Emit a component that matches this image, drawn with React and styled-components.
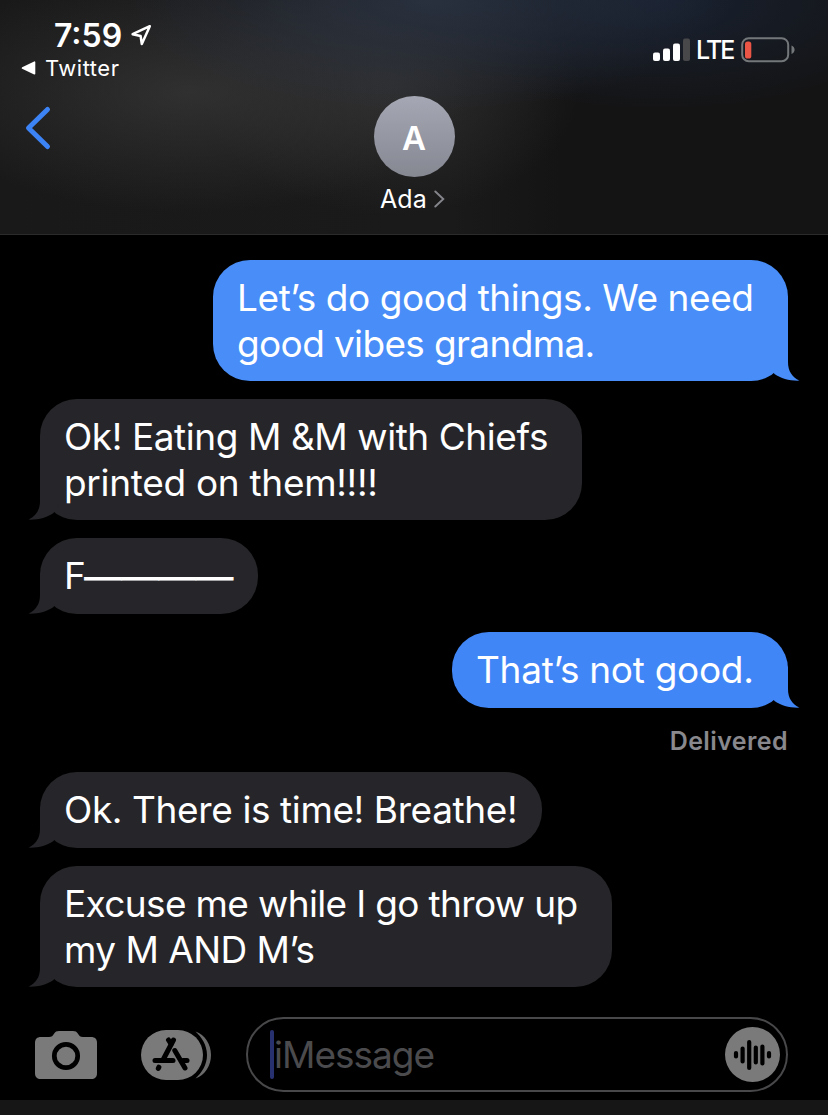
import React from "react";
import styled, { createGlobalStyle } from "styled-components";

const GlobalStyle = createGlobalStyle`
  * { box-sizing: border-box; }
  body { margin: 0; background: #000; font-family: Inter, "Liberation Sans", sans-serif; color: #fff; }
`;

const Screen = styled.div`
  width: 828px;
  height: 1115px;
  display: flex;
  flex-direction: column;
  background: #000;
  overflow: hidden;
`;

const Header = styled.header`
  flex: none;
  height: 235px;
  border-bottom: 1px solid #2b2b2c;
  background:
    radial-gradient(ellipse 300px 110px at 430px 0, rgba(42, 51, 67, 0.85), rgba(42, 51, 67, 0) 100%),
    radial-gradient(ellipse 260px 110px at 660px 0, rgba(25, 35, 53, 0.85), rgba(25, 35, 53, 0) 100%),
    radial-gradient(ellipse 280px 120px at 190px 92px, rgba(54, 54, 55, 0.8), rgba(54, 54, 55, 0) 100%),
    radial-gradient(ellipse 190px 130px at 390px 85px, rgba(50, 50, 51, 0.8), rgba(50, 50, 51, 0) 100%),
    linear-gradient(90deg, #19191a 0, #1a1a1b 450px, #141415 560px, #141415 100%);
`;

const StatusBar = styled.div`
  height: 84px;
  display: flex;
  justify-content: space-between;
  padding: 15px 33px 0 21px;
`;

const ClockRow = styled.div`
  display: flex;
  align-items: center;
  gap: 7px;
  height: 40px;
  padding-left: 33px;
`;

const Clock = styled.span`
  width: 69px;
  font-size: 32px;
  font-weight: 600;
  letter-spacing: 0;
  white-space: nowrap;
`;

const ReturnLink = styled.div`
  display: flex;
  align-items: center;
  gap: 9px;
  height: 26px;
  font-size: 22px;
  letter-spacing: 0.5px;
`;

const Signals = styled.div`
  display: flex;
  align-items: center;
  height: 30px;
  margin-top: 20px;
`;

const Carrier = styled.span`
  width: 41px;
  margin: 0 4px 0 5px;
  font-size: 25px;
  font-weight: 450;
  letter-spacing: -1.9px;
`;

const Nav = styled.div`
  display: grid;
  grid-template-columns: 1fr 120px 1fr;
  padding-top: 12px;
`;

const Back = styled.div`
  padding: 9px 0 0 24px;
`;

const Contact = styled.div`
  display: flex;
  flex-direction: column;
  align-items: center;
`;

const Avatar = styled.div`
  width: 81px;
  height: 81px;
  border-radius: 50%;
  display: flex;
  align-items: center;
  justify-content: center;
  padding-top: 2px;
  background: linear-gradient(#a5a8b4, #858791);
  font-size: 33px;
  font-weight: 600;
`;

const ContactName = styled.div`
  display: flex;
  align-items: center;
  gap: 7px;
  height: 32px;
  margin: 6px 3px 0 0;
  font-size: 25px;
  letter-spacing: 0.2px;
`;

const Thread = styled.main`
  flex: none;
  height: 752px;
  display: flex;
  flex-direction: column;
  gap: 18px;
  padding: 25px 40px 0;
`;

const Bubble = styled.div`
  position: relative;
  align-self: ${(p) => (p.$sent ? "flex-end" : "flex-start")};
  width: ${(p) => p.$width}px;
  min-height: 76px;
  padding: 15px 0 14px 24px;
  border-radius: 37px;
  background: ${(p) => p.$fill};
  font-size: 37px;
  line-height: 46px;
  white-space: nowrap;
`;

const Line = styled.div`
  letter-spacing: ${(p) => p.$track || 0}px;
`;

const Dashes = styled.span`
  font-family: "Liberation Sans", sans-serif;
  line-height: 1;
  letter-spacing: 0.2px;
  margin-left: -1px;
  vertical-align: 1px;
  -webkit-text-stroke: 0.9px #fff;
`;

const Tail = styled.svg`
  position: absolute;
  bottom: 0;
  ${(p) => (p.$sent ? "right: -12px;" : "left: -12px; transform: scaleX(-1);")}
`;

const Receipt = styled.div`
  align-self: flex-end;
  height: 27px;
  margin-top: 1px;
  font-size: 25px;
  line-height: 28px;
  font-weight: 600;
  letter-spacing: 0.4px;
  color: #88888d;
`;

const Composer = styled.div`
  flex: none;
  height: 113px;
  display: flex;
  align-items: center;
  padding: 22px 40px 0 35px;
`;

const AppsIcon = styled.svg`
  margin: 0 35px 0 44px;
`;

const Field = styled.div`
  flex: 1;
  height: 75px;
  margin-top: -1px;
  display: flex;
  align-items: center;
  border: 2px solid #48484a;
  border-radius: 38px;
  padding: 0 6px 0 22px;
`;

const Caret = styled.span`
  width: 4px;
  height: 49px;
  border-radius: 2px;
  background: #28316f;
`;

const Placeholder = styled.span`
  flex: 1;
  font-size: 37px;
  line-height: 46px;
  padding-top: 1px;
  letter-spacing: -1px;
  color: #4b4b4e;
`;

const KeyboardEdge = styled.div`
  flex: 1;
  background: #161616;
`;

const messages = [
  { sent: true, width: 575, fill: "#488df8", lines: [["Let’s do good things. We need", -0.43], ["good vibes grandma.", -0.64]] },
  { width: 542, lines: [["Ok! Eating M &M with Chiefs", -0.43], ["printed on them!!!!", -0.3]] },
  { width: 218, dashes: "————", lines: [["F", -0.4]] },
  { sent: true, width: 336, fill: "#4186f7", lines: [["That’s not good.", -0.3]], receipt: "Delivered" },
  { width: 502, lines: [["Ok. There is time! Breathe!", -0.39]] },
  { width: 572, lines: [["Excuse me while I go throw up", -0.65], ["my M AND M’s", -0.55]] },
];

function Message({ sent, width, fill = "#26262a", lines, dashes }) {
  return (
    <Bubble $sent={sent} $width={width} $fill={fill}>
      <Tail $sent={sent} width="40" height="42" viewBox="0 0 40 42">
        <path d="M28 0V23C28 32 32 38 39.5 41.6C30 42 21 39.5 14.5 35L8 24Z" fill={fill} />
      </Tail>
      {lines.map(([text, track]) => (
        <Line key={text} $track={track}>
          {text}
          {dashes && <Dashes>{dashes}</Dashes>}
        </Line>
      ))}
    </Bubble>
  );
}

export default function App() {
  return (
    <Screen>
      <GlobalStyle />
      <Header>
        <StatusBar>
          <div>
            <ClockRow>
              <Clock>7:59</Clock>
              <svg width="22" height="22" viewBox="0 0 22 22" fill="none" stroke="#fff" strokeWidth="2.5" strokeLinejoin="round">
                <path d="M19.8 2.2L2.6 10.2L10.6 12L11.8 20Z" />
              </svg>
            </ClockRow>
            <ReturnLink>
              <svg width="15" height="14" viewBox="0 0 15 14">
                <path d="M1.5 7L13.5 1.2V12.8Z" fill="#fff" stroke="#fff" strokeWidth="1.6" strokeLinejoin="round" />
              </svg>
              Twitter
            </ReturnLink>
          </div>
          <Signals>
            <svg width="38" height="24" viewBox="0 0 38 24" fill="#fff">
              <rect x="0" y="14.5" width="7" height="8.5" rx="2" />
              <rect x="10" y="10.5" width="7" height="12.5" rx="2" />
              <rect x="20" y="5.5" width="7" height="17.5" rx="2" />
              <rect x="30" y="0.5" width="7" height="22.5" rx="2" fill="#48484b" />
            </svg>
            <Carrier>LTE</Carrier>
            <svg width="54" height="26" viewBox="0 0 54 26">
              <rect x="1.2" y="1.2" width="46" height="23" rx="6.5" fill="none" stroke="#747779" strokeWidth="2" />
              <rect x="4" y="4.5" width="6.3" height="17" rx="2.6" fill="#ea5545" />
              <path d="M50.5 8.5C54.6 10 54.6 15.5 50.5 17Z" fill="#747779" />
            </svg>
          </Signals>
        </StatusBar>
        <Nav>
          <Back>
            <svg width="28" height="46" viewBox="0 0 28 46" fill="none" stroke="#3c83f6" strokeWidth="5" strokeLinecap="round" strokeLinejoin="round">
              <path d="M23.5 4.5L4.5 23L23.5 41.5" />
            </svg>
          </Back>
          <Contact>
            <Avatar>A</Avatar>
            <ContactName>
              Ada
              <svg width="11" height="18" viewBox="0 0 11 18" fill="none" stroke="#85868c" strokeWidth="1.9" strokeLinecap="round">
                <path d="M1.3 1.5L9.3 9L1.3 16.5" />
              </svg>
            </ContactName>
          </Contact>
        </Nav>
      </Header>
      <Thread>
        {messages.map((m) => (
          <React.Fragment key={m.lines[0][0]}>
            <Message {...m} />
            {m.receipt && <Receipt>{m.receipt}</Receipt>}
          </React.Fragment>
        ))}
      </Thread>
      <Composer>
        <svg width="62" height="48" viewBox="0 0 62 48">
          <path d="M6 6H14C17 6 17.5 4.8 19 2.7C20.3 .7 21.7 0 24 0H38C40.3 0 41.7 .7 43 2.7C44.5 4.8 45 6 48 6H56C60 6 62 8 62 12V42C62 46 60 48 56 48H6C2 48 0 46 0 42V12C0 8 2 6 6 6Z" fill="#7a7a7a" />
          <circle cx="31" cy="25" r="11.7" fill="none" stroke="#000" strokeWidth="4.7" />
        </svg>
        <AppsIcon width="70" height="50" viewBox="0 0 70 50">
          <path d="M54.5 1.5C64 5 70 14 70 25C70 36 64 45 54.5 48.5C60.5 43 66 35 66 25C66 15 60.5 7 54.5 1.5Z" fill="#6b6b6b" />
          <rect width="62" height="50" rx="25" fill="#7a7a7a" />
          <g stroke="#000" strokeWidth="5" strokeLinecap="round" fill="none">
            <path d="M32.5 10L22.5 29" />
            <path d="M27.5 10L30 14" />
            <path d="M33.8 20.5L44 38" />
            <path d="M14 30.6H32" />
            <path d="M42 30.6H46" />
            <path d="M17.9 37.2L17.3 38.4" />
          </g>
        </AppsIcon>
        <Field>
          <Caret />
          <Placeholder>iMessage</Placeholder>
          <svg width="55" height="55" viewBox="0 0 55 55">
            <circle cx="27.5" cy="27.5" r="27.5" fill="#7a7a7a" />
            <g stroke="#000" strokeWidth="4.2" strokeLinecap="round">
              <path d="M11 26V29.5M17.6 21.5V34.5M24.2 15V41M30.8 20.5V35.5M37.4 19.5V36.5M44 26V29.5" />
            </g>
          </svg>
        </Field>
      </Composer>
      <KeyboardEdge />
    </Screen>
  );
}
